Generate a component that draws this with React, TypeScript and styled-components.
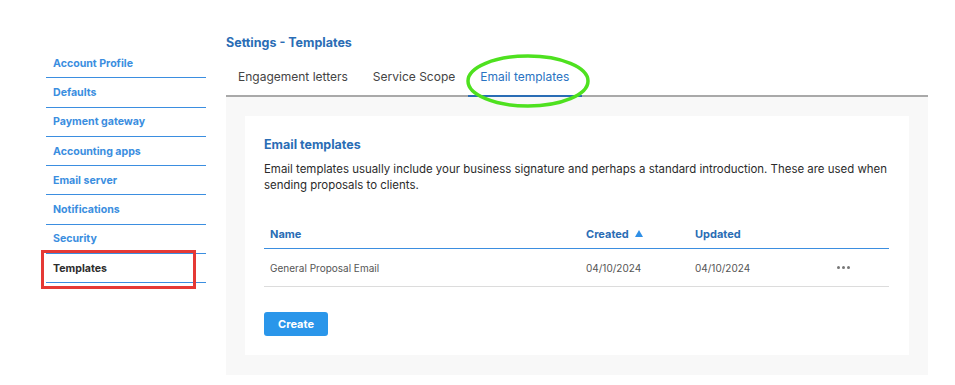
import React from 'react'
import styled, { createGlobalStyle } from 'styled-components'

const GlobalStyle = createGlobalStyle`
  body {
    margin: 0;
    background: #fff;
    font-family: Inter, "Liberation Sans", sans-serif;
  }
`

const Page = styled.div`
  display: flex;
  width: 955px;
  height: 385px;
  position: relative;
  overflow: hidden;
`

const Sidebar = styled.nav`
  width: 160px;
  margin: 49px 0 0 46px;
  display: flex;
  flex-direction: column;
`

const NavItem = styled.div<{ $active?: boolean }>`
  height: 29.3px;
  display: flex;
  align-items: center;
  padding-left: 7px;
  font-size: 10.6px;
  font-weight: 700;
  color: ${p => (p.$active ? '#2d2d2d' : '#3b8ee0')};
  border-bottom: 1.5px solid #3b8ee0;
  box-sizing: border-box;
`

const Main = styled.div`
  width: 702px;
  margin: 35px 0 0 20px;
  display: flex;
  flex-direction: column;
`

const Title = styled.h1`
  margin: 0 0 18px;
  font-size: 12.5px;
  font-weight: 700;
  color: #2a6db5;
  line-height: 16px;
`

const Tabs = styled.div`
  display: flex;
  border-bottom: 2px solid #a9a9a9;
`

const Tab = styled.div<{ $active?: boolean }>`
  padding: 0 13px 10px 12px;
  font-size: 12px;
  line-height: 16px;
  color: ${p => (p.$active ? '#2a73c2' : '#444')};
  margin-bottom: -2px;
  border-bottom: 2px solid ${p => (p.$active ? '#2a6db5' : 'transparent')};
`

const Panel = styled.div`
  background: #f8f8f8;
  padding: 19px 19px 20px;
`

const Card = styled.div`
  background: #fff;
  padding: 21px 19px 19px;
`

const CardTitle = styled.h2`
  margin: 0 0 8px;
  font-size: 12.5px;
  font-weight: 700;
  color: #2a6db5;
  line-height: 16px;
`

const Description = styled.p`
  margin: 0 0 26px;
  font-size: 11.45px;
  line-height: 16px;
  color: #2b2b2b;
`

const Table = styled.div`
  width: 625px;
`

const TableRow = styled.div<{ $header?: boolean }>`
  display: grid;
  grid-template-columns: 316px 109px 142px 1fr;
  align-items: center;
  height: ${p => (p.$header ? '29px' : '37px')};
  border-bottom: 1px solid ${p => (p.$header ? '#3b8ee0' : '#dcdcdc')};
  padding-left: 6px;
  font-size: ${p => (p.$header ? '11px' : '10px')};
  font-weight: ${p => (p.$header ? 700 : 400)};
  color: ${p => (p.$header ? '#2a6db5' : '#555')};
`

const HeaderCell = styled.div`
  display: flex;
  align-items: center;
  gap: 6px;
`

const SortArrow = styled.span`
  width: 0;
  height: 0;
  border-left: 4px solid transparent;
  border-right: 4px solid transparent;
  border-bottom: 7px solid #2f8fe6;
`

const Dots = styled.div`
  display: flex;
  gap: 2px;

  span {
    width: 3px;
    height: 3px;
    border-radius: 50%;
    background: #777;
  }
`

const CreateButton = styled.button`
  margin-top: 25px;
  width: 64px;
  height: 24px;
  border: none;
  border-radius: 3px;
  background: #2a96ea;
  color: #fff;
  font-family: inherit;
  font-size: 11px;
  font-weight: 700;
`

const RedBox = styled.div`
  position: absolute;
  left: 41px;
  top: 250px;
  width: 155px;
  height: 39px;
  border: 3px solid #e53935;
  box-sizing: border-box;
`

const GreenRing = styled.svg`
  position: absolute;
  left: 465px;
  top: 53px;
`

const navItems = [
  'Account Profile',
  'Defaults',
  'Payment gateway',
  'Accounting apps',
  'Email server',
  'Notifications',
  'Security',
  'Templates'
]

const App = () => {
  return (
    <Page>
      <GlobalStyle />
      <Sidebar>
        {navItems.map(item => (
          <NavItem key={item} $active={item === 'Templates'}>
            {item}
          </NavItem>
        ))}
      </Sidebar>
      <Main>
        <Title>Settings - Templates</Title>
        <Tabs>
          <Tab>Engagement letters</Tab>
          <Tab>Service Scope</Tab>
          <Tab $active>Email templates</Tab>
        </Tabs>
        <Panel>
          <Card>
            <CardTitle>Email templates</CardTitle>
            <Description>
              Email templates usually include your business signature and perhaps a standard introduction. These are used when
              sending proposals to clients.
            </Description>
            <Table>
              <TableRow $header>
                <HeaderCell>Name</HeaderCell>
                <HeaderCell>
                  Created <SortArrow />
                </HeaderCell>
                <HeaderCell>Updated</HeaderCell>
                <div />
              </TableRow>
              <TableRow>
                <div>General Proposal Email</div>
                <div>04/10/2024</div>
                <div>04/10/2024</div>
                <Dots>
                  <span />
                  <span />
                  <span />
                </Dots>
              </TableRow>
            </Table>
            <CreateButton>Create</CreateButton>
          </Card>
        </Panel>
      </Main>
      <RedBox />
      <GreenRing width="128" height="58" viewBox="0 0 128 58">
        <ellipse cx="63" cy="28" rx="60" ry="25" fill="none" stroke="#4ee11f" strokeWidth="3.5" />
      </GreenRing>
    </Page>
  )
}

export default App
